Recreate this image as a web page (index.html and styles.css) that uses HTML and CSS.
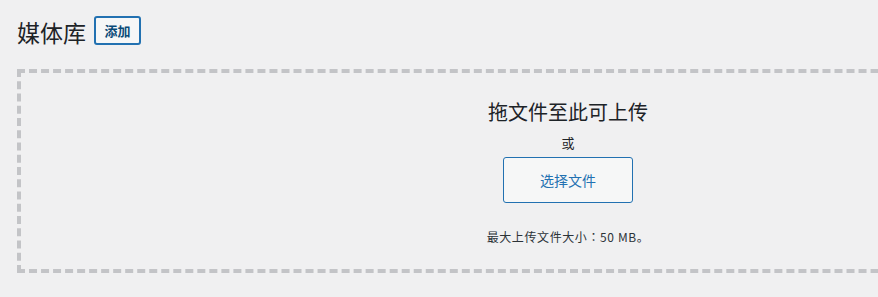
FILE: index.html
```html
<!DOCTYPE html>
<html lang="zh-CN">
<head>
<meta charset="utf-8">
<title>媒体库</title>
<link rel="stylesheet" href="styles.css">
</head>
<body>
<div class="wrap">
  <div class="heading-row">
    <h1 class="page-title">媒体库</h1>
    <a class="page-title-action" href="#">添加</a>
  </div>
  <div class="uploader">
    <h2 class="drop-title">拖文件至此可上传</h2>
    <p class="drop-or">或</p>
    <button class="browse-button" type="button">选择文件</button>
    <p class="max-size">最大上传文件大小<span class="colon" lang="zh-Hant">：</span>50 MB。</p>
  </div>
</div>
</body>
</html>
```

FILE: styles.css
```css
html, body {
  margin: 0;
  padding: 0;
  background: #f0f0f1;
  color: #1d2327;
  font-family: "Noto Sans CJK SC", "Noto Sans", sans-serif;
  overflow: hidden;
}

.wrap {
  padding: 0 0 0 17px;
}

.heading-row {
  display: flex;
  align-items: center;
  height: 29px;
  padding-top: 16px;
  gap: 8px;
}

.page-title {
  margin: 0;
  font-size: 23px;
  font-weight: 400;
  line-height: 29px;
  color: #1d2327;
  position: relative;
  top: 2px;
}

.page-title-action {
  display: inline-flex;
  align-items: center;
  justify-content: center;
  box-sizing: border-box;
  width: 47px;
  height: 29px;
  border: 2px solid #2271b1;
  border-radius: 3px;
  background: #f6f7f7;
  color: #0a4b78;
  font-size: 13px;
  font-weight: 700;
  text-decoration: none;
}

.uploader {
  box-sizing: border-box;
  width: 1102px;
  height: 204px;
  margin-top: 24px;
  border: 4px dashed #c3c4c7;
  display: flex;
  flex-direction: column;
  align-items: center;
}

.drop-title {
  margin: 25px 0 0;
  font-size: 20px;
  font-weight: 400;
  line-height: 28px;
  color: #1d2327;
}

.drop-or {
  margin: 7px 0 0;
  font-size: 13px;
  line-height: 20px;
  color: #1d2327;
}

.browse-button {
  margin-top: 4px;
  box-sizing: border-box;
  width: 130px;
  height: 46px;
  border: 1px solid #2271b1;
  border-radius: 3px;
  background: #f6f7f7;
  color: #2271b1;
  font-family: "Noto Sans CJK SC", "Noto Sans", sans-serif;
  font-size: 14px;
  padding: 0;
  cursor: pointer;
}

.max-size {
  margin: 25px 0 0;
  font-size: 12px;
  line-height: 18px;
  letter-spacing: 0.6px;
  color: #2c3338;
}

.colon {
  font-family: "Noto Sans CJK TC", "Noto Sans CJK SC", sans-serif;
}
```
